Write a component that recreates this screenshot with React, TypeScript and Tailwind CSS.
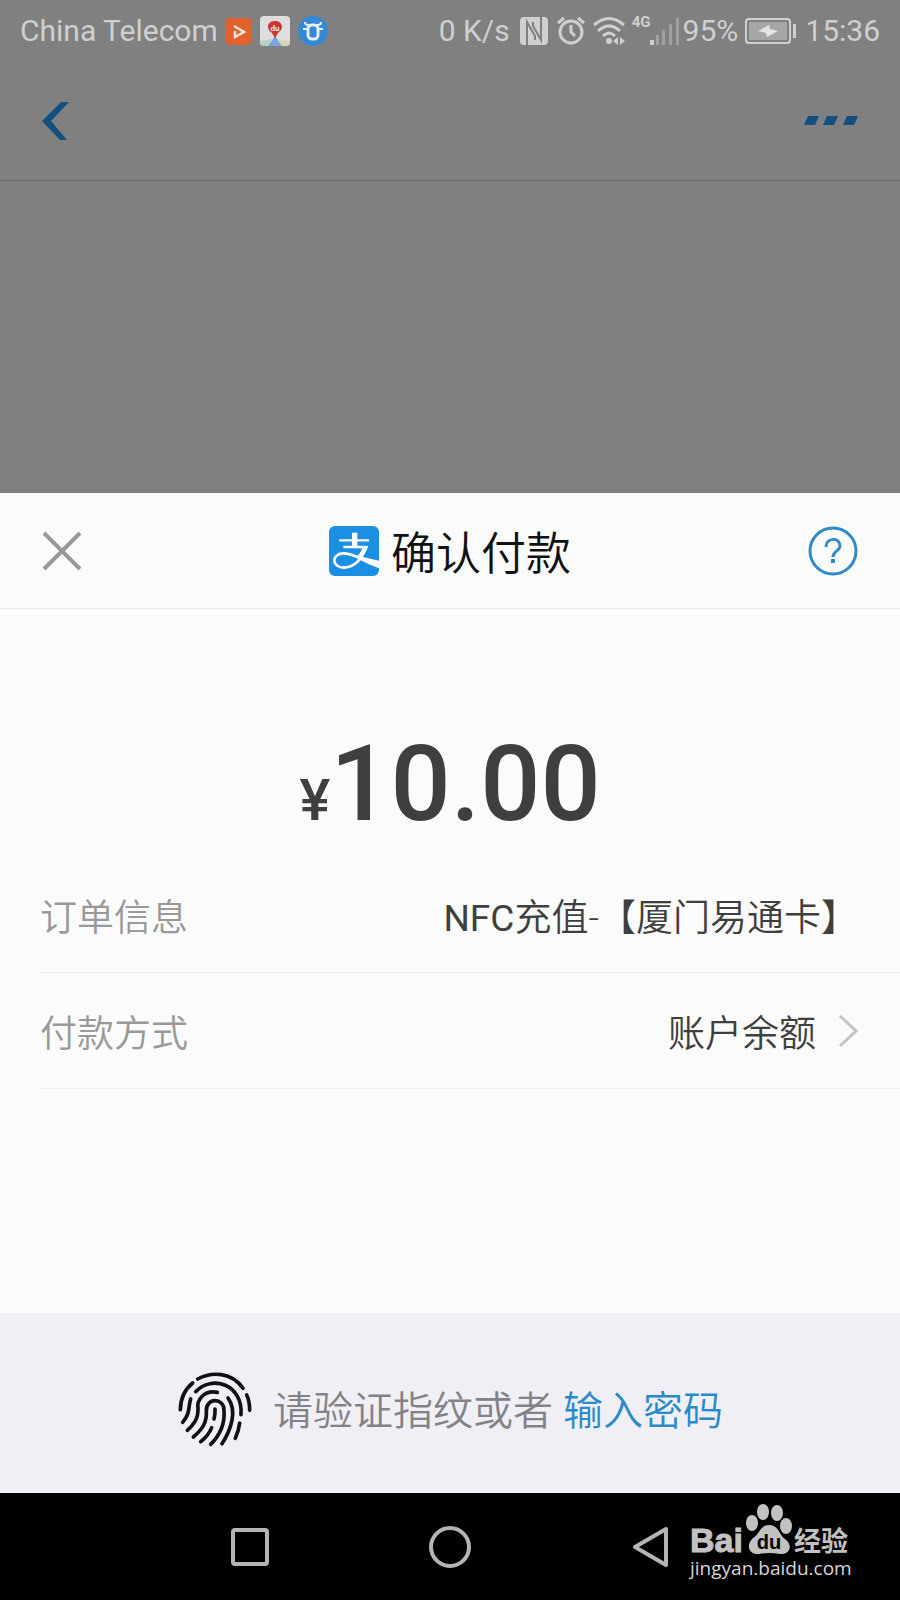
import type { ReactNode } from "react";

const StatusIcons = () => {
  return (
    <div className="flex items-center text-[#cfcfcf]">
      <svg width="28" height="28" viewBox="0 0 28 28" className="ml-2.5">
        <rect width="28" height="28" rx="4" fill="currentColor" />
        <path
          d="M7 28V5L15 19V23M21 0V23L13 9V5"
          fill="none"
          stroke="#808080"
          strokeWidth="2"
        />
      </svg>
      <svg
        width="30"
        height="30"
        viewBox="0 0 30 30"
        fill="none"
        stroke="currentColor"
        strokeWidth="3"
        className="ml-2"
      >
        <circle cx="15" cy="16" r="11" />
        <path d="M2 7L8 2M28 7L22 2" />
        <path d="M15 9V16L19 20" />
      </svg>
      <svg
        width="34"
        height="30"
        viewBox="0 0 34 30"
        fill="none"
        stroke="currentColor"
        strokeWidth="3"
        className="ml-1.5"
      >
        <path d="M2 9Q17 -4 32 9M6 15Q17 5 28 15M11 20Q17 14 23 20" />
        <circle cx="17" cy="25" r="3" fill="currentColor" stroke="none" />
        <path
          d="M21 25L26 21V29ZM33 25L28 21V29Z"
          fill="currentColor"
          stroke="none"
        />
      </svg>
      <span className="mb-[18px] ml-1.5 text-[15px] leading-none font-bold">
        4G
      </span>
      <svg width="30" height="28" viewBox="0 0 30 28" className="-ml-px">
        <rect y="23" width="4" height="5" fill="currentColor" />
        <path
          d="M6 18h3v10h-3ZM12 13h3v15h-3ZM19 7h3v21h-3ZM26 1h3v27h-3Z"
          fill="#a0a0a0"
        />
      </svg>
    </div>
  );
};

const AppBadges = () => {
  return (
    <div className="ml-[7px] flex items-center gap-2">
      <svg width="27" height="27" viewBox="0 0 27 27">
        <rect width="27" height="27" rx="5" fill="#e0622c" />
        <path
          d="M9 8L19 14L10 19V13"
          fill="none"
          stroke="#f3e4dc"
          strokeWidth="2.5"
        />
      </svg>
      <svg width="30" height="30" viewBox="0 0 30 30">
        <rect width="30" height="30" rx="4" fill="#dedede" />
        <path d="M0 25L12 23L8 30H4Q0 30 0 26Z" fill="#b9cfc8" />
        <path d="M30 25L18 23L22 30H26Q30 30 30 26Z" fill="#d8d6b4" />
        <path d="M15 20L8 30H22Z" fill="#7ba5e0" />
        <path
          d="M15 5C6 5 7 14 11 16C13 18 14 20 15 23C16 20 17 18 19 16C24 13 23 5 15 5Z"
          fill="#cc3436"
        />
        <text
          x="15"
          y="15"
          fontSize="8"
          fontWeight="700"
          textAnchor="middle"
          fill="#eee"
        >
          du
        </text>
      </svg>
      <svg width="30" height="30" viewBox="0 0 30 30">
        <circle cx="15" cy="15" r="15" fill="#3489d6" />
        <g fill="none" stroke="#e2eef8">
          <rect x="10" y="9" width="10" height="14" rx="4" strokeWidth="3" />
          <path d="M7 6Q7 9 10 9H20Q23 9 23 6M5 13H9M21 13H25" strokeWidth="2" />
        </g>
      </svg>
    </div>
  );
};

const StatusBar = () => {
  return (
    <div className="flex h-[62px] items-center px-5 text-[30px] leading-none font-normal text-[#cfcfcf]">
      <span>China Telecom</span>
      <AppBadges />
      <span className="ml-auto">0 K/s</span>
      <StatusIcons />
      <span className="ml-[3px]">95%</span>
      <svg width="52" height="26" viewBox="0 0 52 26" className="mr-2 ml-[7px]">
        <rect
          x="1"
          y="1"
          width="44"
          height="24"
          rx="3"
          fill="#808080"
          stroke="currentColor"
          strokeWidth="2"
        />
        <rect x="4" y="4" width="38" height="18" fill="#a6a6a6" />
        <path d="M13 13L24 7L25 11L33 13L22 19L21 15Z" fill="#e4e4e4" />
        <rect x="48" y="6" width="3" height="14" fill="currentColor" />
      </svg>
      <span>15:36</span>
    </div>
  );
};

const AlipayLogo = () => {
  return (
    <svg width="50" height="50" viewBox="0 0 150 150">
      <rect width="150" height="150" rx="18" fill="#1b8fe2" />
      <g fill="none" stroke="#fff">
        <path d="M77 20V62" strokeWidth="16" />
        <path d="M31 43H120M43 63H108" strokeWidth="7" />
        <path
          d="M112 60C104 88 84 124 45 125C8 125 6 84 42 82C64 81 80 92 104 101"
          strokeWidth="8"
        />
      </g>
      <path d="M103 60H118Q112 78 97 97L86 91Q98 76 103 60Z" fill="#fff" />
      <path d="M70 85Q105 95 150 104V127Q118 116 84 97Z" fill="#fff" />
    </svg>
  );
};

const Fingerprint = () => {
  return (
    <svg
      width="76"
      height="76"
      viewBox="51 60 228 228"
      fill="none"
      stroke="#101015"
      strokeWidth="11"
      strokeLinecap="round"
    >
      <path d="M113 84C155 62 215 62 249 112" />
      <path d="M260 132Q269 150 269 178" />
      <path d="M98 96Q62 125 61 176" />
      <path d="M107 122C155 70 250 100 243 191" />
      <path d="M239 216Q236 240 226 262" />
      <path d="M92 144C84 170 92 185 68 214" />
      <path d="M172 124C130 116 110 150 114 172C115 205 100 222 82 238" />
      <path d="M204 141C232 178 214 235 186 278" />
      <path d="M100 258C127 235 141 215 139 180C138 139 192 139 192 178C195 215 180 252 152 280" />
      <path d="M155 230Q145 255 122 272" />
      <path d="M165 174Q166 190 162 204" />
    </svg>
  );
};

const Watermark = () => {
  return (
    <svg
      width="168"
      height="86"
      viewBox="0 0 168 86"
      className="absolute top-2 right-11 font-normal"
      fill="#c2c2c2"
    >
      <text
        x="2"
        y="51"
        fontSize="34"
        fontWeight="700"
        fontFamily="Liberation Sans, sans-serif"
        stroke="#c2c2c2"
      >
        Bai
      </text>
      <ellipse cx="64" cy="22" rx="6" ry="8" />
      <ellipse cx="75" cy="11" rx="6" ry="8" />
      <ellipse cx="89" cy="12" rx="6" ry="8" />
      <ellipse cx="98" cy="25" rx="6" ry="8" />
      <path d="M81 24C91 24 91 34 97 38C106 45 101 54 92 53Q81 51 71 53C60 54 58 43 65 37C72 33 72 24 81 24Z" />
      <text
        x="81"
        y="48"
        fontSize="20"
        fontWeight="700"
        textAnchor="middle"
        fontFamily="Liberation Sans, sans-serif"
        fill="#000"
      >
        du
      </text>
      <text
        x="106"
        y="50"
        fontSize="27"
        fontWeight="700"
        fontFamily="Noto Sans CJK SC, sans-serif"
      >
        经验
      </text>
      <text
        x="2"
        y="74"
        fontSize="19"
        fontFamily="Open Sans, sans-serif"
        fill="#d6d6d6"
      >
        jingyan.baidu.com
      </text>
    </svg>
  );
};

interface RowProps {
  label: string;
  children: ReactNode;
}

const Row = ({ label, children }: RowProps) => {
  return (
    <div className="ml-10 flex h-[116px] items-center justify-between border-b border-[#eeeef0] pr-[42px] text-[37px] leading-none">
      <span className="pt-2 text-[#999]">{label}</span>
      {children}
    </div>
  );
};

export default function App() {
  return (
    <div className="flex min-h-screen flex-col bg-[#808080] font-['Roboto','Noto_Sans_CJK_SC_DemiLight','Noto_Sans_CJK_SC',sans-serif] font-[350]">
      <StatusBar />

      {/* Dimmed page behind the sheet */}
      <header className="flex h-[119px] items-center justify-between border-b border-[#686868] px-[42px]">
        <button type="button" aria-label="返回">
          <svg width="27" height="40" viewBox="0 0 27 40" fill="#12507f">
            <path d="M19 1H27L9 20L25 39H18L0 20Z" />
          </svg>
        </button>
        <button type="button" aria-label="更多">
          <svg width="54" height="10" viewBox="0 0 54 10" fill="#12507f">
            <path d="M4 0H15L11 9H0ZM23 0H34L30 9H19ZM43 0H54L50 9H39Z" />
          </svg>
        </button>
      </header>
      <div className="flex-1" />

      {/* Payment sheet */}
      <main className="bg-[#fbfbfb] pb-56">
        <div className="flex h-[116px] items-center justify-between border-b border-[#e8e8ea] px-[42px]">
          <button type="button" aria-label="关闭" className="w-[50px]">
            <svg
              width="40"
              height="40"
              viewBox="0 0 40 40"
              stroke="#999"
              strokeWidth="4"
            >
              <path d="M2 2L38 38M38 2L2 38" />
            </svg>
          </button>
          <h1 className="flex items-center gap-3 text-[45px] leading-none font-[350] text-[#111]">
            <AlipayLogo />
            <span className="pt-2">确认付款</span>
          </h1>
          <button type="button" aria-label="帮助">
            <svg
              width="50"
              height="50"
              viewBox="0 0 50 50"
              fill="none"
              stroke="#2f8cc6"
              strokeWidth="3"
            >
              <circle cx="25" cy="25" r="23" />
              <path d="M18 21C18 11 32 11 32 20C32 25 25 25 25 31" />
              <path d="M23 35H27" strokeWidth="4" />
            </svg>
          </button>
        </div>

        <p className="flex items-baseline justify-center pt-[122px] pb-5 leading-none font-medium text-[#3f3f3f]">
          <span className="text-[58px] leading-none">¥</span>
          <span className="text-[106px] leading-none">10.00</span>
        </p>

        <Row label="订单信息">
          <span className="pt-2 text-[#3f3f3f]">
            <span className="font-normal">NFC</span>充值-【厦门易通卡】
          </span>
        </Row>
        <Row label="付款方式">
          <button
            type="button"
            className="flex items-center gap-[22px] text-[#3f3f3f]"
          >
            <span className="pt-2">账户余额</span>
            <svg
              width="20"
              height="34"
              viewBox="0 0 20 34"
              fill="none"
              stroke="#c4c4c4"
              strokeWidth="3"
            >
              <path d="M2 2L18 17L2 32" />
            </svg>
          </button>
        </Row>
      </main>

      <section className="flex h-[180px] items-center justify-center bg-[#f0eff5] pt-3 text-[40px] leading-none text-[#838387]">
        <Fingerprint />
        <span className="ml-5 pt-1.5">请验证指纹或者</span>
        <button type="button" className="ml-2.5 pt-1.5 text-[#2b8ac9]">
          输入密码
        </button>
      </section>

      {/* Android navigation */}
      <nav className="relative grid h-[107px] grid-cols-3 items-center justify-items-center bg-black px-[150px] text-[#b4b4b4]">
        <button type="button" aria-label="最近任务">
          <svg width="38" height="38" viewBox="0 0 38 38">
            <rect
              x="2"
              y="2"
              width="34"
              height="34"
              rx="2"
              fill="none"
              stroke="currentColor"
              strokeWidth="4"
            />
          </svg>
        </button>
        <button type="button" aria-label="主屏幕">
          <svg width="42" height="42" viewBox="0 0 42 42">
            <circle
              cx="21"
              cy="21"
              r="19"
              fill="none"
              stroke="currentColor"
              strokeWidth="4"
            />
          </svg>
        </button>
        <button type="button" aria-label="后退">
          <svg width="38" height="42" viewBox="0 0 38 42">
            <path
              d="M35 3V39L4 21Z"
              fill="none"
              stroke="currentColor"
              strokeWidth="4"
              strokeLinejoin="round"
            />
          </svg>
        </button>
        <Watermark />
      </nav>
    </div>
  );
}
